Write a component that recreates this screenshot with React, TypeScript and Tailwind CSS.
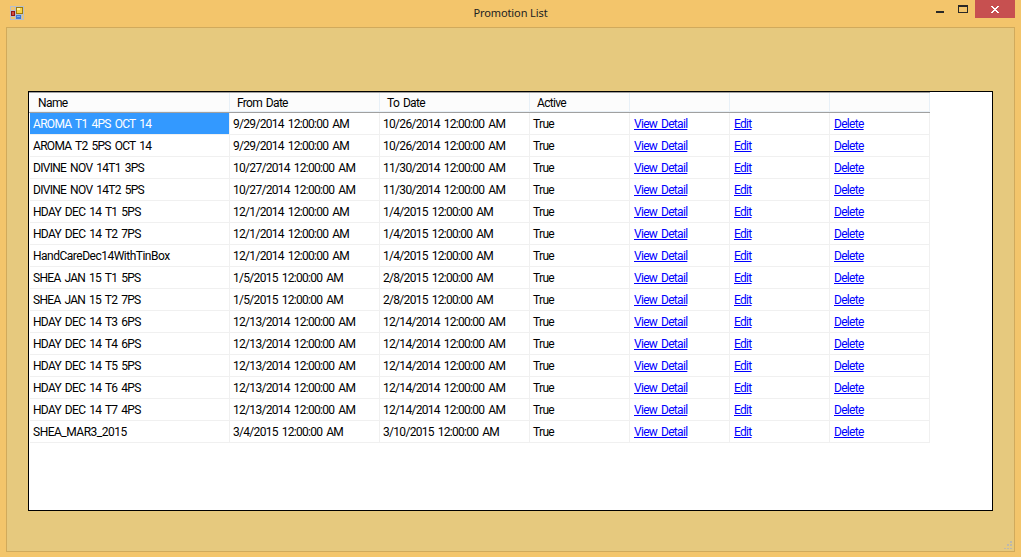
const rows: string[][] = [
  ["AROMA T1 4PS OCT 14", "9/29/2014 12:00:00 AM", "10/26/2014 12:00:00 AM"],
  ["AROMA T2 5PS OCT 14", "9/29/2014 12:00:00 AM", "10/26/2014 12:00:00 AM"],
  ["DIVINE NOV 14T1 3PS", "10/27/2014 12:00:00 AM", "11/30/2014 12:00:00 AM"],
  ["DIVINE NOV 14T2 5PS", "10/27/2014 12:00:00 AM", "11/30/2014 12:00:00 AM"],
  ["HDAY DEC 14 T1 5PS", "12/1/2014 12:00:00 AM", "1/4/2015 12:00:00 AM"],
  ["HDAY DEC 14 T2 7PS", "12/1/2014 12:00:00 AM", "1/4/2015 12:00:00 AM"],
  ["HandCareDec14WithTinBox", "12/1/2014 12:00:00 AM", "1/4/2015 12:00:00 AM"],
  ["SHEA JAN 15 T1 5PS", "1/5/2015 12:00:00 AM", "2/8/2015 12:00:00 AM"],
  ["SHEA JAN 15 T2 7PS", "1/5/2015 12:00:00 AM", "2/8/2015 12:00:00 AM"],
  ["HDAY DEC 14 T3 6PS", "12/13/2014 12:00:00 AM", "12/14/2014 12:00:00 AM"],
  ["HDAY DEC 14 T4 6PS", "12/13/2014 12:00:00 AM", "12/14/2014 12:00:00 AM"],
  ["HDAY DEC 14 T5 5PS", "12/13/2014 12:00:00 AM", "12/14/2014 12:00:00 AM"],
  ["HDAY DEC 14 T6 4PS", "12/13/2014 12:00:00 AM", "12/14/2014 12:00:00 AM"],
  ["HDAY DEC 14 T7 4PS", "12/13/2014 12:00:00 AM", "12/14/2014 12:00:00 AM"],
  ["SHEA_MAR3_2015", "3/4/2015 12:00:00 AM", "3/10/2015 12:00:00 AM"],
];

const columns = "grid grid-cols-[200px_150px_150px_100px_100px_100px_100px]";
const headers = ["Name", "From Date", "To Date", "Active", "", "", ""];
const links = ["View Detail", "Edit", "Delete"];

function AppIcon() {
  return (
    <svg width="14" height="14" viewBox="0 0 14 14" shapeRendering="crispEdges">
      <path fill="#b7bfca" d="M0 0h14v14H0z" />
      <path fill="#f2c46b" d="M1 1h4v3H1zM1 11h4v2H1zM12 9h1v4h-1z" />
      <path fill="#8f1717" d="M1 5h4v5H1z" />
      <path fill="#d54a3b" d="M2 6h2v3H2z" />
      <path fill="#a27b08" d="M6 1h7v7H6z" />
      <path fill="#f7d246" d="M7 2h5v5H7z" />
      <path fill="#fff0a0" d="M7 2h3v2H7z" />
      <path fill="#3f78d2" d="M6 9h5v4H6z" />
      <path fill="#79aaf0" d="M7 10h3v1H7z" />
    </svg>
  );
}

function TitleBar() {
  return (
    <header className="grid h-[27px] shrink-0 grid-cols-[1fr_auto_1fr]">
      <div className="pl-[10px] pt-[6px]"><AppIcon /></div>
      <h1 className="pt-[5px] font-['Noto_Sans',sans-serif] text-[11px] leading-4 tracking-[-0.1px] text-[#222] [word-spacing:0px]">Promotion List</h1>
      <div className="flex justify-end pr-[6px]">
        <svg width="40" height="18" viewBox="0 0 40 18" shapeRendering="crispEdges">
          <path fill="#2a2927" d="M1 11h8v2H1z" />
          <path fill="#2a2927" fillRule="evenodd" d="M23 5h10v8H23zM24 7v5h8V7z" />
        </svg>
        <button className="flex h-[18px] w-[40px] justify-center bg-[#c75050]" aria-label="Close">
          <svg width="8" height="18" viewBox="0 0 8 18" shapeRendering="crispEdges">
            <path fill="#fff" d="M0 6h2v1h1v1h2V7h1V6h2v1H7v1H6v1H5v1h1v1h1v1h1v1H6v-1H5v-1H3v1H2v1H0v-1h1v-1h1v-1h1V9H2V8H1V7H0z" />
          </svg>
        </button>
      </div>
    </header>
  );
}

const cell = "flex h-[22px] items-center border-b border-r border-[#f0f0f0] pl-[3px] whitespace-pre";

export default function App() {
  return (
    <div className="flex h-[557px] w-[1021px] flex-col bg-[#f3c56b] font-['Roboto',sans-serif] text-[12px] tracking-[-0.7px] text-black [word-spacing:1.6px]">
      <TitleBar />
      <main className="relative ml-[6px] h-[525px] w-[1009px] border border-[#d0aa5c] bg-[#e6c97e] pl-[21px] pt-[63px]">
        <section className="h-[420px] w-[965px] border border-black bg-white">
          <div className="w-[901px] border-b border-t border-b-[#a0a0a0] border-t-[#a0a0a0] bg-[#fcfcfc] pl-px">
            <div className={columns}>
              {headers.map((label, i) => (
                <div key={i} className={`flex h-[19px] items-center border-b border-r border-[#e8f0f7] pt-[2px] ${i === 0 ? "pl-[8px] tracking-[-0.6px]" : "pl-[7px]"}`}>
                  <span>{label}</span>
                </div>
              ))}
            </div>
          </div>
          <div className="pl-px">
            {rows.map((row, r) => (
              <div key={r} className={columns}>
                {row.map((value, c) => (
                  <div key={c} className={`${cell} ${r === 0 && c === 0 ? "bg-[#3399ff] bg-clip-padding text-white" : ""} ${value.includes(" ") ? "" : "tracking-[-0.5px]"}`}>
                    <span>{value}</span>
                  </div>
                ))}
                <div className={cell}><span>True</span></div>
                {links.map((label) => (
                  <div key={label} className={cell}>
                    <a className="ml-px text-[#0000ff] underline underline-offset-1 [text-decoration-skip-ink:none]">{label}</a>
                  </div>
                ))}
              </div>
            ))}
          </div>
        </section>
        <svg className="absolute bottom-[2px] right-[2px]" width="8" height="8" viewBox="0 0 8 8" shapeRendering="crispEdges">
          <path fill="#bcb8ae" d="M6 0h2v2H6zM3 3h2v2H3zM6 3h2v2H6zM0 7h2v1H0zM3 7h2v1H3zM6 7h2v1H6z" />
        </svg>
      </main>
    </div>
  );
}
